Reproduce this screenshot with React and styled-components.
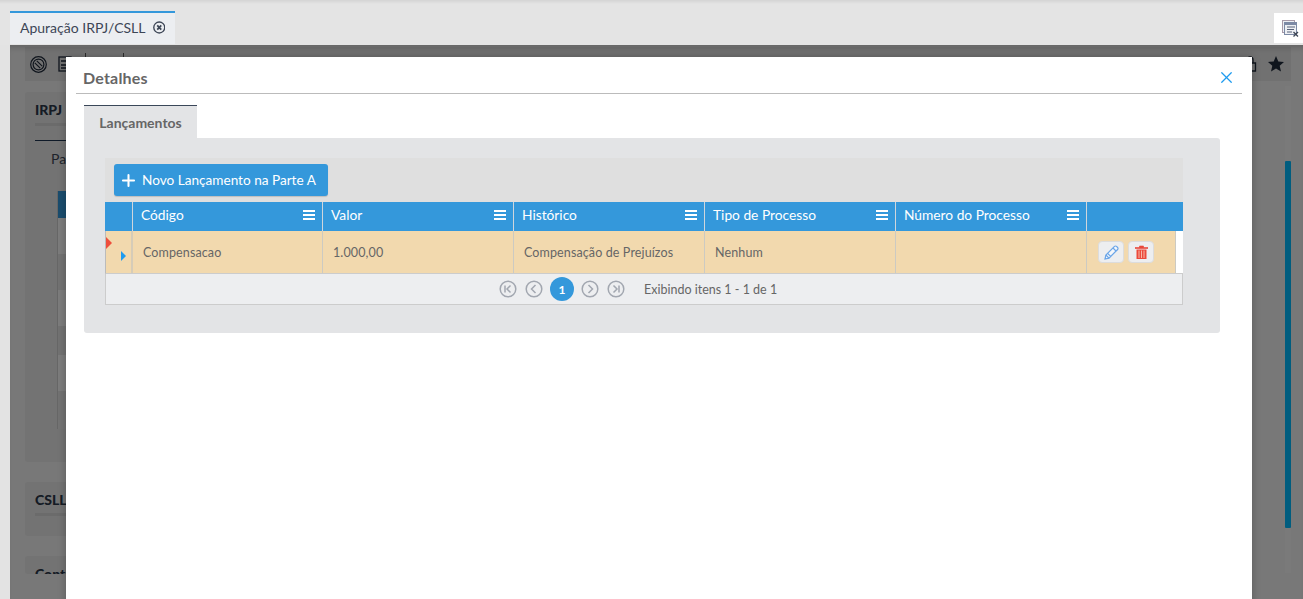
import React from "react"
import styled, { createGlobalStyle } from "styled-components"
import { Plus, X } from "lucide-react"

const GlobalStyle = createGlobalStyle`
  html, body { margin: 0; padding: 0; height: 100%; overflow: hidden; }
  body { font-family: Lato, "Liberation Sans", sans-serif; background: #e3e3e3; }
  * { box-sizing: border-box; }
`

const columns = [
  { title: "Código", value: "Compensacao" },
  { title: "Valor", value: "1.000,00" },
  { title: "Histórico", value: "Compensação de Prejuízos" },
  { title: "Tipo de Processo", value: "Nenhum" },
  { title: "Número do Processo", value: "" },
]

const backRows = [
  { height: 36, odd: false },
  { height: 36, odd: true },
  { height: 36, odd: false },
  { height: 29, odd: true },
  { height: 36, odd: false },
  { height: 29, odd: true },
]

const MenuLines = () => (
  <MenuIcon viewBox="0 0 12 10">
    <path d="M0 1h12M0 5h12M0 9h12" stroke="#fff" strokeWidth="1.8" />
  </MenuIcon>
)

const PagerIcon = ({ d }) => (
  <PagerBtn>
    <svg width="18" height="18" viewBox="0 0 18 18" fill="none" stroke="#a2a7b0" strokeWidth="1.5">
      <circle cx="9" cy="9" r="7.8" />
      <path d={d} />
    </svg>
  </PagerBtn>
)

const App = () => {
  return (
    <Page>
      <GlobalStyle />
      <TopBar>
        <Tab>
          Apuração IRPJ/CSLL
          <svg width="13" height="13" viewBox="0 0 13 13" fill="none" stroke="#3d4656">
            <circle cx="6.5" cy="6.5" r="5.7" strokeWidth="1.4" />
            <path d="M4.4 4.4l4.2 4.2M8.6 4.4l-4.2 4.2" strokeWidth="1.8" />
          </svg>
        </Tab>
        <CloseAll>
          <svg width="17" height="17" viewBox="0 0 17 17" fill="none">
            <rect x="0.5" y="0.5" width="12" height="12" fill="#eef0f4" stroke="#a79aa8" />
            <rect x="2.5" y="2.5" width="12" height="12" fill="#eef0f4" stroke="#7d8aa5" />
            <path d="M2.5 4h12" stroke="#7d8aa5" strokeWidth="2" />
            <path d="M5 7h8M5 9.5h7M5 12h5" stroke="#59637a" />
            <path d="M11.5 12l4.5 4.5M16 12l-4.5 4.5" stroke="#3d4656" strokeWidth="1.3" />
          </svg>
        </CloseAll>
      </TopBar>
      <Stage>
        <Toolbar>
          <svg width="17" height="17" viewBox="0 0 17 17" fill="none" stroke="#1f2a3a" strokeWidth="1.2">
            <circle cx="8.5" cy="8.5" r="7.8" />
            <circle cx="8.5" cy="8.5" r="5.4" />
            <path d="M4.8 6.8l5.4 5.4M6.8 4.8l5.4 5.4" />
          </svg>
          <svg width="14" height="16" viewBox="0 0 14 16" fill="none" stroke="#1f2a3a" strokeWidth="1.3">
            <rect x="1" y="1" width="12" height="14" />
            <path d="M3 5h8M3 9h8M3 12h8" />
          </svg>
          <ToolDivider $gap={2} />
          <ToolDivider $gap={26} />
          <ToolSpacer />
          <svg width="14" height="16" viewBox="0 0 14 16" fill="none" stroke="#1f2a3a" strokeWidth="1.3">
            <path d="M1.5 7h11v8h-11zM4 7V4a3 3 0 0 1 6 0v3" />
          </svg>
          <svg width="16" height="16" viewBox="0 0 16 16" fill="#1f2a3a">
            <path d="M8 0l2.3 5.4 5.7.5-4.3 3.8 1.3 5.8L8 12.4l-5 3.1 1.3-5.8L0 5.9l5.7-.5z" />
          </svg>
        </Toolbar>
        <Content>
          <Cards>
            <Card $height={370}>
              <CardTitle>IRPJ</CardTitle>
              <SubTab>Parte A</SubTab>
              <BackTable>
                <BackHead />
                {backRows.map((row, index) => (
                  <BackRow key={index} $height={row.height} $odd={row.odd} />
                ))}
                <BackFooter />
              </BackTable>
            </Card>
            <Card $height={54}>
              <CardTitle>CSLL</CardTitle>
            </Card>
            <Card $height={16}>
              <CardTitle>Contabil</CardTitle>
            </Card>
          </Cards>
          <ScrollTrack>
            <ScrollThumb />
          </ScrollTrack>
        </Content>
        <Overlay />
      </Stage>

      <Modal>
        <ModalHeader>
          <ModalTitle>Detalhes</ModalTitle>
          <X size={19} color="#1e9bef" strokeWidth={1.6} />
        </ModalHeader>
        <TabStrip>
          <ActiveTab>Lançamentos</ActiveTab>
        </TabStrip>
        <TabPanel>
          <Grid>
            <GridToolbar>
              <AddButton>
                <Plus size={19} strokeWidth={2.6} />
                Novo Lançamento na Parte A
              </AddButton>
            </GridToolbar>
            <HeaderRow>
              <ExpandHead />
              {columns.map(col => (
                <HeadCell key={col.title}>
                  {col.title}
                  <MenuLines />
                </HeadCell>
              ))}
              <ActionHead />
            </HeaderRow>
            <DataRow>
              <RowMarker>
                <RedFlag />
                <BlueArrow />
              </RowMarker>
              {columns.map(col => (
                <DataCell key={col.title}>{col.value}</DataCell>
              ))}
              <ActionCell>
                <IconButton>
                  <svg width="15" height="15" viewBox="0 0 15 15" fill="#f4f7fb" stroke="#6aa5e8" strokeWidth="1.2">
                    <path d="M1 14l.9-4L10.5 1.4a1.4 1.4 0 0 1 2 0l1.1 1.1a1.4 1.4 0 0 1 0 2L5 13.1z" />
                    <path d="M1.9 10L5 13.1M3.6 8.3l3.1 3.1M9 3l3 3" />
                  </svg>
                </IconButton>
                <IconButton>
                  <svg width="13" height="14" viewBox="0 0 13 14">
                    <path d="M0 2.5h13v1H0zM4.5 2.5V1h4v1.5" fill="#e8483a" stroke="#e8483a" strokeWidth=".6" />
                    <path d="M1.5 4.5h10V14h-10z" fill="#ec4a3c" />
                    <path d="M4 5.5v7.5M6.5 5.5v7.5M9 5.5v7.5" stroke="#f6b9a8" strokeWidth="1" />
                  </svg>
                </IconButton>
              </ActionCell>
              <RowGap />
            </DataRow>
            <Pager>
              <PagerIcon d="M6 5.5v7M11.5 5.5L8 9l3.5 3.5" />
              <PagerIcon d="M10.5 5L6.5 9l4 4" />
              <PageNumber>1</PageNumber>
              <PagerIcon d="M7.5 5l4 4-4 4" />
              <PagerIcon d="M12 5.5v7M6.5 5.5L10 9l-3.5 3.5" />
              <PagerInfo>Exibindo itens 1 - 1 de 1</PagerInfo>
            </Pager>
          </Grid>
        </TabPanel>
      </Modal>
    </Page>
  )
}

export default App

const Page = styled.div`
  position: relative;
  width: 1303px;
  height: 599px;
  overflow: hidden;
  display: flex;
  flex-direction: column;
  background: #e3e3e3;
`

const TopBar = styled.div`
  height: 45px;
  flex: none;
  display: flex;
  justify-content: space-between;
  align-items: flex-end;
  padding: 11px 0 1px 10px;
  background: linear-gradient(#d4d4d4 0, #e4e4e4 4px);
`

const Tab = styled.div`
  width: 165px;
  height: 33px;
  display: flex;
  align-items: center;
  gap: 7px;
  padding: 0 10px 2px;
  border-top: 2px solid #3498db;
  background: #eceef1;
  color: #3d4656;
  font-size: 14px;
  white-space: nowrap;
`

const CloseAll = styled.div`
  width: 29px;
  height: 30px;
  margin-bottom: 1px;
  padding-left: 3px;
  display: flex;
  align-items: center;
  justify-content: center;
  background: #fff;
`

const Stage = styled.div`
  position: relative;
  flex: 1;
  margin-left: 10px;
  padding: 2px 12px 0 15px;
  display: flex;
  flex-direction: column;
  background: #f0f0f0;
  overflow: hidden;
`

const Overlay = styled.div`
  position: absolute;
  inset: 0;
  background: rgba(0, 0, 0, 0.5);
  box-shadow: inset 0 6px 6px -4px rgba(0, 0, 0, 0.2);
`

const Toolbar = styled.div`
  height: 34px;
  flex: none;
  display: flex;
  align-items: center;
  gap: 11px;
  padding: 0 7px 0 5px;
  background: #e2e2e2;
`

const ToolDivider = styled.div`
  width: 1px;
  height: 22px;
  margin-left: ${p => p.$gap}px;
  background: #555;
`

const ToolSpacer = styled.div`
  flex: 1;
`

const Content = styled.div`
  flex: 1;
  display: flex;
  justify-content: space-between;
  padding-top: 5px;
  min-height: 0;
`

const Cards = styled.div`
  width: 1220px;
  display: flex;
  flex-direction: column;
  gap: 20px;
  padding-top: 6px;
`

const Card = styled.div`
  height: ${p => p.$height}px;
  flex: none;
  padding: 9px 10px;
  border-radius: 3px;
  background: #e6e6e6;
  overflow: hidden;
`

const CardTitle = styled.div`
  height: 25px;
  font-size: 14px;
  font-weight: 900;
  color: #2a3648;
  border-bottom: 3px solid #d6d6d6;
`

const SubTab = styled.div`
  height: 36px;
  margin-top: 14px;
  display: flex;
  align-items: center;
  padding-left: 16px;
  border-top: 1px solid #1f3550;
  color: #3d4656;
  font-size: 14px;
`

const BackTable = styled.div`
  margin: 15px 0 0 22px;
  border-left: 1px solid #cfcfcf;
`

const BackHead = styled.div`
  height: 27px;
  background: #3498db;
`

const BackRow = styled.div`
  height: ${p => p.$height}px;
  background: ${p => (p.$odd ? "#e4e4e4" : "#f8f8f8")};
`

const BackFooter = styled.div`
  height: 9px;
  background: #e8e8e8;
`

const ScrollTrack = styled.div`
  width: 6px;
  height: 487px;
  padding-top: 75px;
  background: #f4f4f4;
`

const ScrollThumb = styled.div`
  height: 367px;
  background: #00bbff;
  border-radius: 1px;
`

const Modal = styled.div`
  position: absolute;
  left: 66px;
  top: 57px;
  width: 1186px;
  height: 560px;
  padding: 0 10px;
  background: #fff;
  box-shadow: 0 0 8px rgba(0, 0, 0, 0.25);
`

const ModalHeader = styled.div`
  height: 37px;
  display: flex;
  align-items: center;
  justify-content: space-between;
  padding: 5px 6px 0 7px;
  border-bottom: 1px solid #bbb;
`

const ModalTitle = styled.div`
  color: #666;
  font-size: 16px;
  font-weight: 700;
  letter-spacing: 0.2px;
`

const TabStrip = styled.div`
  margin: 11px 0 0 8px;
  display: flex;
`

const ActiveTab = styled.div`
  width: 113px;
  height: 33px;
  display: flex;
  align-items: center;
  justify-content: center;
  padding-top: 1px;
  border-top: 1px solid #3a4759;
  background: #e3e4e6;
  color: #666;
  font-size: 14px;
  font-weight: 700;
`

const TabPanel = styled.div`
  width: 1136px;
  height: 195px;
  margin-left: 8px;
  padding: 20px 37px 0 21px;
  background: #e3e4e6;
  border-radius: 0 3px 3px 3px;
`

const Grid = styled.div`
  width: 1078px;
`

const GridToolbar = styled.div`
  height: 44px;
  padding: 6px 9px;
  background: #dfdfdf;
`

const AddButton = styled.button`
  width: 214px;
  height: 32px;
  display: flex;
  align-items: center;
  gap: 4px;
  padding: 0 0 0 5px;
  border: 0;
  border-radius: 3px;
  background: #3498db;
  color: #fff;
  font-family: inherit;
  font-size: 13.6px;
  white-space: nowrap;
  box-shadow: 0 1px 1px rgba(0, 0, 0, 0.15);
`

const HeaderRow = styled.div`
  height: 29px;
  display: grid;
  grid-template-columns: 28px 190px repeat(4, 191px) 1fr;
  background: #3498db;
`

const ExpandHead = styled.div`
  border-right: 1px solid #cfd6dc;
`

const HeadCell = styled.div`
  display: flex;
  align-items: center;
  justify-content: space-between;
  padding: 0 7px 4px 8px;
  border-right: 1px solid #cfd6dc;
  color: #fff;
  font-size: 13.75px;
`

const ActionHead = styled.div``

const MenuIcon = styled.svg`
  width: 12px;
  height: 10px;
  margin-top: 1px;
`

const DataRow = styled.div`
  height: 43px;
  display: grid;
  grid-template-columns: 27px 190px repeat(4, 191px) 89px 1fr;
  border-left: 1px solid #bbb;
  border-bottom: 1px solid #ccc;
  background: #f2d9ae;
`

const RowMarker = styled.div`
  position: relative;
  border-right: 2px solid #d6ccb8;
`

const RedFlag = styled.span`
  position: absolute;
  left: 0;
  top: 6px;
  border-style: solid;
  border-width: 6px 0 6px 6px;
  border-color: transparent transparent transparent #ee4e3c;
`

const BlueArrow = styled.span`
  position: absolute;
  left: 15px;
  top: 20px;
  border-style: solid;
  border-width: 5px 0 5px 5px;
  border-color: transparent transparent transparent #1e9bef;
`

const DataCell = styled.div`
  display: flex;
  align-items: center;
  padding-left: 10px;
  border-right: 1px solid #cccac2;
  color: #666;
  font-size: 12.5px;
  letter-spacing: 0.12px;
`

const ActionCell = styled.div`
  display: flex;
  align-items: center;
  gap: 4px;
  padding-left: 11px;
  border-right: 1px solid #cccac2;
`

const RowGap = styled.div`
  background: #fff;
`

const IconButton = styled.div`
  width: 26px;
  height: 22px;
  display: flex;
  align-items: center;
  justify-content: center;
  border: 1px solid #dcdcdc;
  border-radius: 4px;
  background: #edeef0;
`

const Pager = styled.div`
  height: 31px;
  display: flex;
  align-items: center;
  padding-left: 393px;
  gap: 8px;
  border: 1px solid #ccc;
  border-top: 0;
  background: #edeef0;
`

const PagerBtn = styled.span`
  width: 18px;
  height: 18px;
  display: flex;
`

const PageNumber = styled.span`
  width: 24px;
  height: 24px;
  margin: 0 -1px;
  display: flex;
  align-items: center;
  justify-content: center;
  border-radius: 50%;
  background: #3498db;
  color: #fff;
  font-size: 12px;
  font-weight: 700;
`

const PagerInfo = styled.span`
  margin-left: 11px;
  color: #666;
  font-size: 12.5px;
`
